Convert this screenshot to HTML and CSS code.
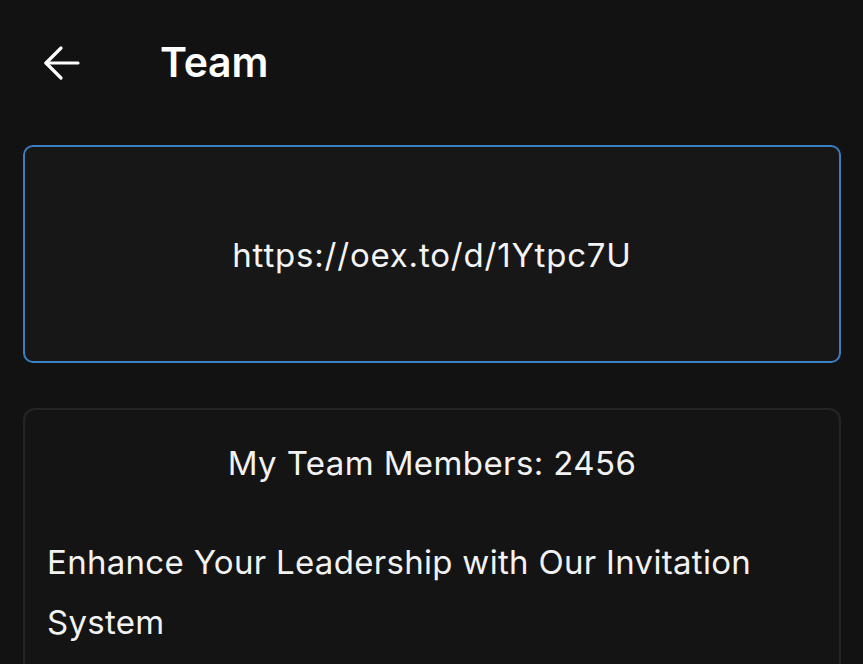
FILE: index.html
```html
<!DOCTYPE html>
<html lang="en">
<head>
<meta charset="utf-8">
<link rel="stylesheet" href="styles.css">
</head>
<body>
<div class="page">
  <header class="header">
    <svg class="back" width="40" height="40" viewBox="0 0 40 40" fill="none" stroke="#fff" stroke-width="3.2" stroke-linecap="round" stroke-linejoin="round">
      <path d="M37 21H5"/>
      <path d="M20 6L5 21L20 36"/>
    </svg>
    <h1 class="title">Team</h1>
  </header>
  <div class="link-box">https://oex.to/d/1Ytpc7U</div>
  <section class="card">
    <div class="members">My Team Members: 2456</div>
    <p class="desc">Enhance Your Leadership with Our Invitation System</p>
  </section>
</div>
</body>
</html>
```
FILE: styles.css
```css
* { box-sizing: border-box; }
html, body { margin: 0; padding: 0; background: #121212; }
body {
  font-family: Inter, "Noto Sans", sans-serif;
  color: #f2f2f2;
  width: 863px;
  height: 664px;
  overflow: hidden;
}
.page {
  padding: 0 22px 0 23px;
  display: flex;
  flex-direction: column;
}
.header {
  height: 122px;
  display: flex;
  align-items: center;
  padding-top: 2px;
}
.back {
  margin-left: 18px;
  flex: none;
}
.title {
  margin: 0 0 0 79px;
  font-size: 41px;
  font-weight: 600;
  color: #fff;
  letter-spacing: -0.2px;
}
.link-box {
  margin-top: 23px;
  height: 218px;
  border: 2px solid #3b7fc2;
  border-radius: 10px;
  background: #171717;
  display: flex;
  align-items: center;
  justify-content: center;
  font-size: 33px;
  letter-spacing: 0.8px;
  color: #f4f4f4;
  padding-top: 2px;
}
.card {
  margin-top: 45px;
  border: 2px solid #252525;
  border-radius: 12px;
  background: #141414;
  padding: 28px 22px 40px 22px;
}
.members {
  text-align: center;
  font-size: 33px;
  letter-spacing: 0.4px;
  line-height: 50px;
}
.desc {
  margin: 44px 0 0 0;
  font-size: 33px;
  letter-spacing: 0.3px;
  line-height: 60px;
}
```
